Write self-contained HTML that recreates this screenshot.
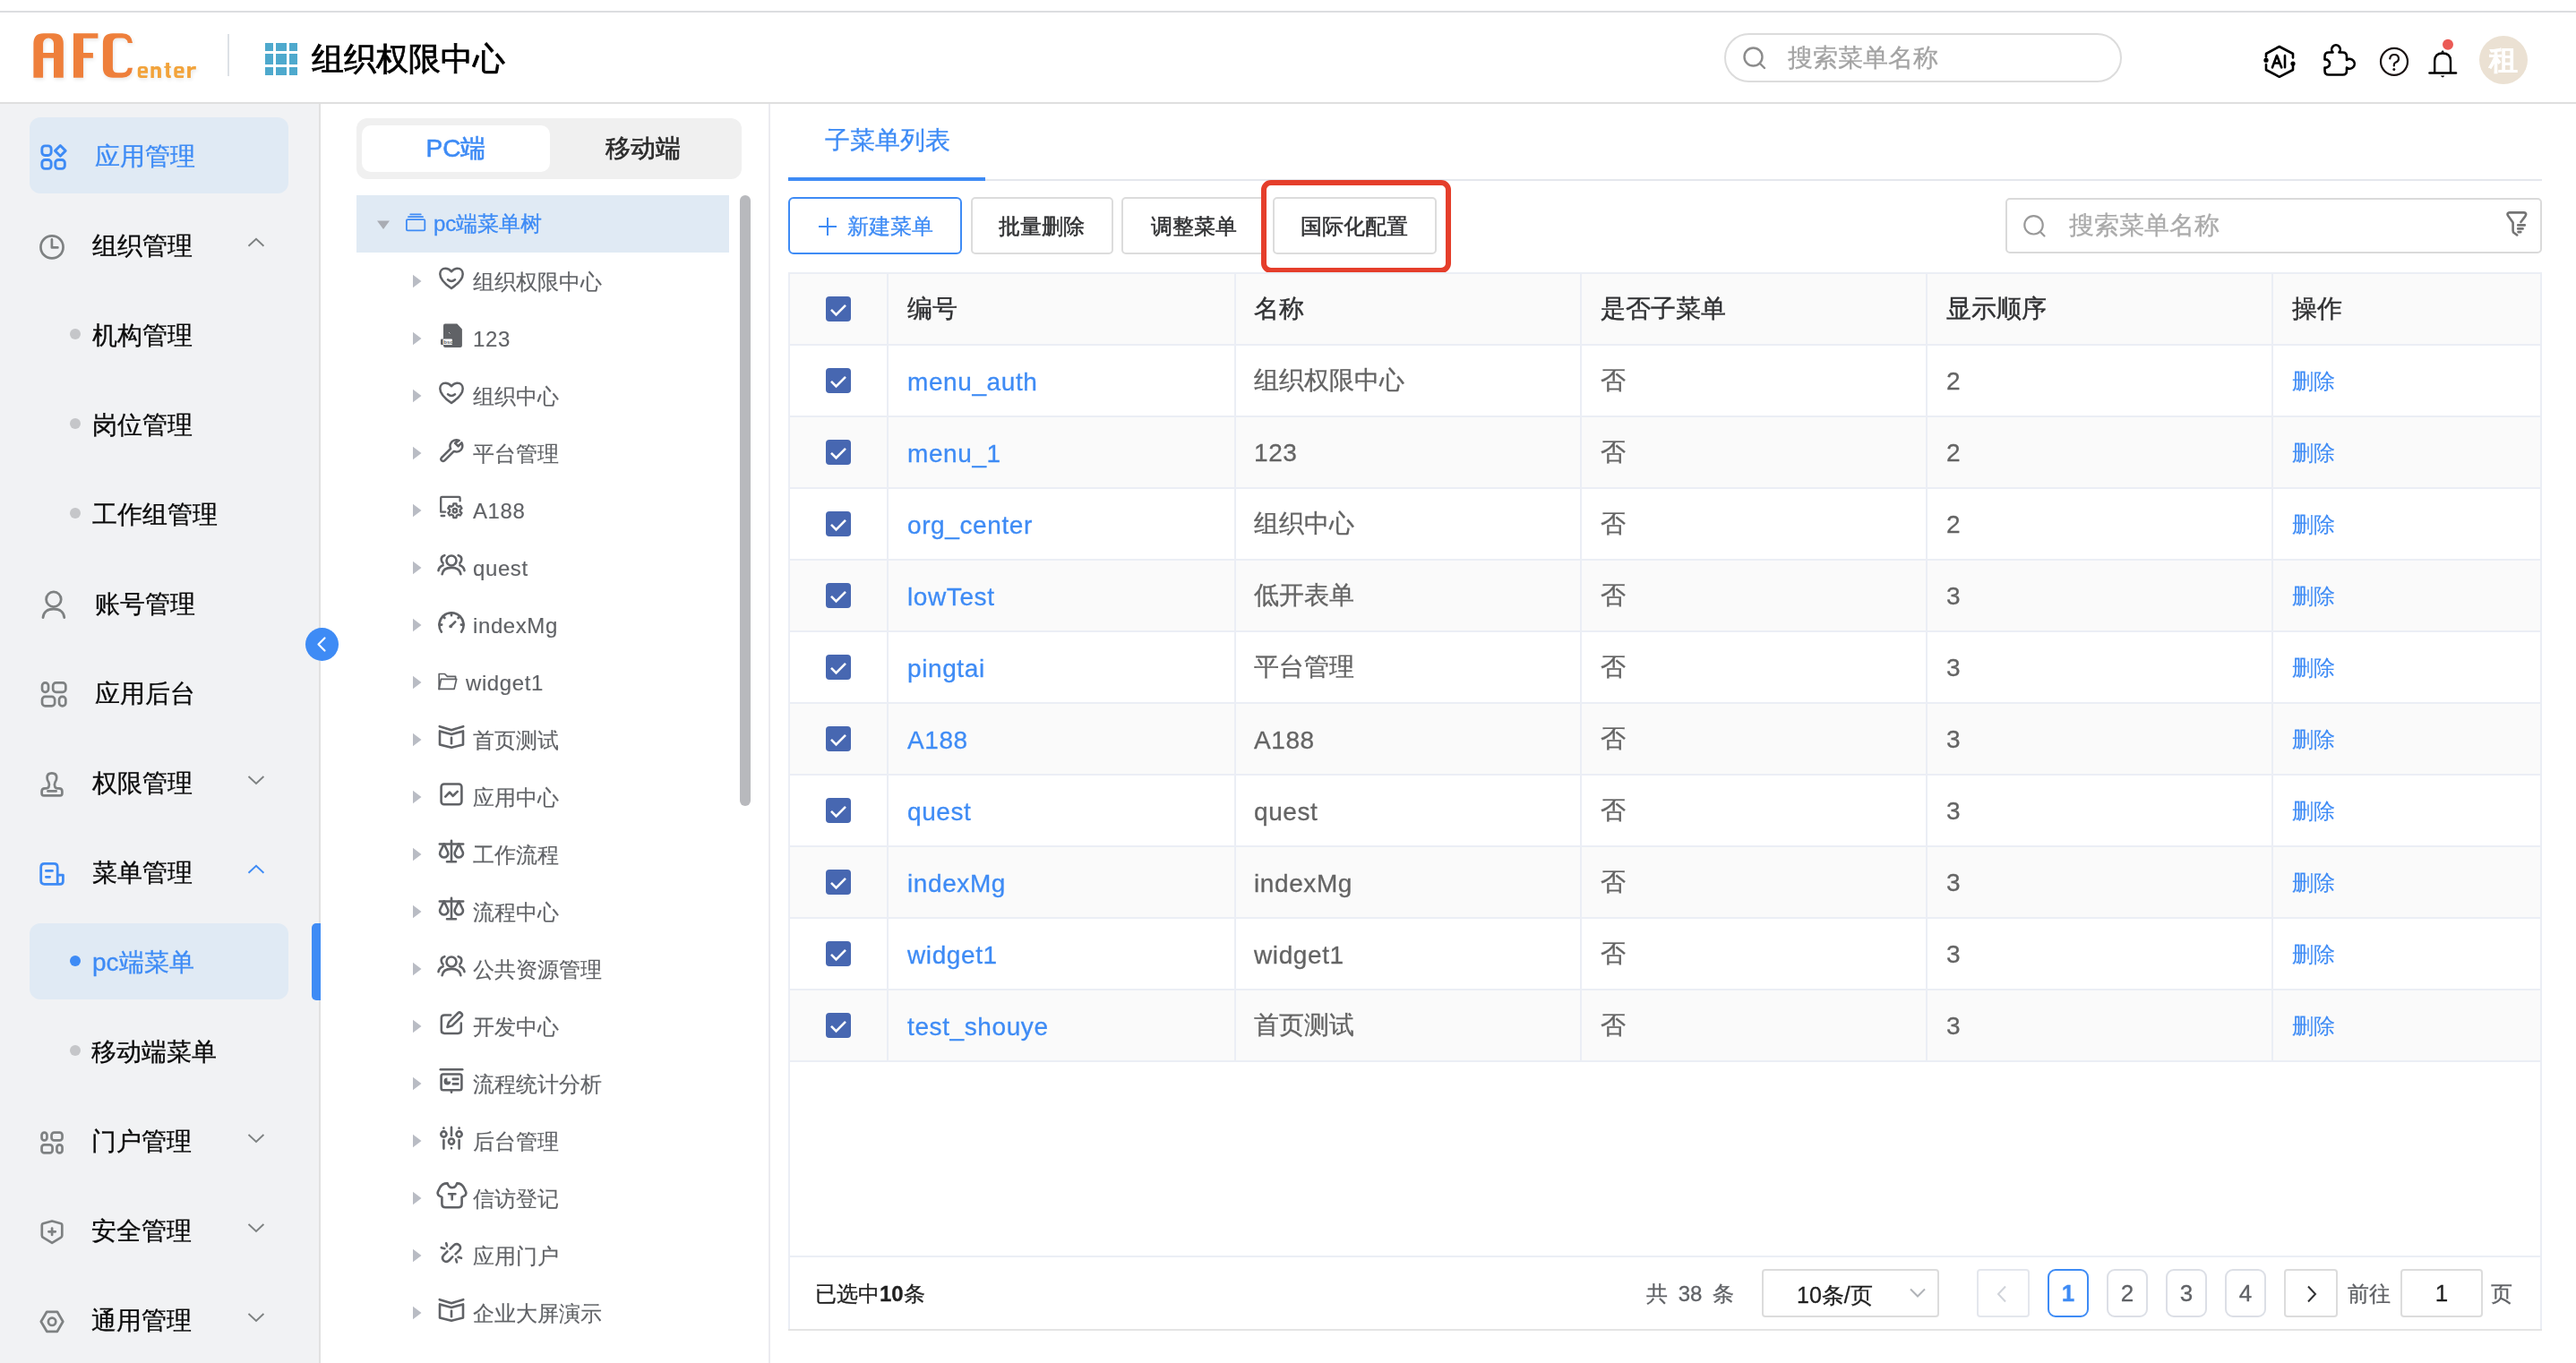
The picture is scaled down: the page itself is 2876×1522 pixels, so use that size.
<!DOCTYPE html>
<html><head><meta charset="utf-8"><title>组织权限中心</title>
<style>
*{box-sizing:border-box;margin:0;padding:0}
html,body{width:2876px;height:1522px;overflow:hidden;background:#fff;font-family:"Liberation Sans",sans-serif}
.a{position:absolute}
.t{position:absolute;white-space:nowrap;line-height:40px;will-change:transform;-webkit-text-stroke-width:0.3px}
.m{-webkit-text-stroke-width:0.6px}
b{font-weight:700}
</style></head><body>
<div class="a" style="left:0;top:12px;width:2876px;height:2px;background:#dcdde0"></div>
<div class="a" style="left:0;top:114px;width:2876px;height:2px;background:#dfdfdf"></div>
<svg class="a" style="left:0;top:0" width="260" height="114" viewBox="0 0 260 114">
<defs><filter id="lsh" x="-10%" y="-10%" width="130%" height="140%"><feGaussianBlur in="SourceAlpha" stdDeviation="2.2"/><feOffset dx="1" dy="2"/><feComponentTransfer><feFuncA type="linear" slope="0.10"/></feComponentTransfer><feMerge><feMergeNode/><feMergeNode in="SourceGraphic"/></feMerge></filter></defs>
<g filter="url(#lsh)">
<path fill="#ee7f3b" fill-rule="evenodd" d="M37.4,86.7 V48.6 Q37.4,37.2 48.6,37.2 H59.6 Q70.8,37.2 70.8,48.6 V86.7 H60 V64.8 H48.1 V86.7 Z M48.1,58.9 H60 V48.6 A5.95,6 0 0 0 48.1,48.6 Z"/>
<path fill="#ee7f3b" d="M82,37.2 H109.4 V42.7 H93 V59.1 H103.9 V64.8 H93 V86.7 H82 Z"/>
<path fill="#ee7f3b" d="M148,48.1 H142.8 Q142,42.6 136,42.6 H131.5 Q125.9,42.6 125.9,48.2 V75.7 Q125.9,81.3 131.5,81.3 H136 Q142,81.3 142.8,75.8 H148 Q147,86.7 136.5,86.7 H126 Q114.9,86.7 114.9,75.6 V48.4 Q114.9,37.2 126,37.2 H136.5 Q147,37.2 148,48.1 Z"/>
<g fill="#f2a33a" fill-rule="evenodd">
<path d="M157.5,74 H161.2 Q165,74 165,77.8 V81.7 H157.2 V83.2 Q157.2,84.2 158.2,84.2 H164.8 L164.2,86.9 H157.5 Q153.75,86.9 153.75,83 V77.8 Q153.75,74 157.5,74 Z M157.2,78.9 H161.5 V77.6 Q161.5,76.4 160.5,76.4 H158.2 Q157.2,76.4 157.2,77.6 Z"/>
<path d="M168.4,74 H171.9 V75 Q173,74 175.5,74 Q179.9,74 179.9,78.5 V86.9 H176 V78.8 Q176,77.6 174.8,77.6 H173 Q171.9,77.6 171.9,78.8 V86.9 H168.4 Z"/>
<path d="M185.2,70 H189 V74 H190.8 V75.8 H189 V82.5 Q189,84.2 190.2,84.2 H190.8 V86.9 H188.5 Q185.2,86.9 185.2,83.5 V75.8 H183.3 V74 H185.2 Z"/>
<path transform="translate(40.55,0)" d="M157.5,74 H161.2 Q165,74 165,77.8 V81.7 H157.2 V83.2 Q157.2,84.2 158.2,84.2 H164.8 L164.2,86.9 H157.5 Q153.75,86.9 153.75,83 V77.8 Q153.75,74 157.5,74 Z M157.2,78.9 H161.5 V77.6 Q161.5,76.4 160.5,76.4 H158.2 Q157.2,76.4 157.2,77.6 Z"/>
<path d="M209.1,74 H212.9 V75.8 Q214,74 216.5,74 H218.8 V77.5 H216 Q212.9,77.5 212.9,80 V86.9 H209.1 Z"/>
</g></g></svg>
<div class="a" style="left:254px;top:38px;width:2px;height:47px;background:#dde1e6"></div>
<svg class="a" style="left:296px;top:48px" width="36" height="36" viewBox="0 0 36 36"><g fill="#4ea9cd"><rect x="0" y="0" width="9" height="9"/><rect x="0" y="12" width="9" height="12"/><rect x="0" y="27" width="9" height="9"/><rect x="12" y="0" width="12" height="9"/><rect x="12" y="12" width="12" height="12"/><rect x="12" y="27" width="12" height="9"/><rect x="27" y="0" width="9" height="9"/><rect x="27" y="12" width="9" height="12"/><rect x="27" y="27" width="9" height="9"/></g></svg>
<div class="t" style="left:348px;top:46px;font-size:36px;-webkit-text-stroke-width:0.8px;color:#000">组织权限中心</div>
<div class="a" style="left:1925px;top:37px;width:444px;height:55px;border:2px solid #dcdcdc;border-radius:28px"></div>
<svg class="a" style="left:1944px;top:50px" width="30" height="30" viewBox="0 0 30 30"><circle cx="13.5" cy="13.5" r="10" fill="none" stroke="#8c8c8c" stroke-width="2.4"/><path d="M21,21 L26,26" stroke="#8c8c8c" stroke-width="2.4" stroke-linecap="round"/></svg>
<div class="t" style="left:1996px;top:45px;font-size:28px;color:#a3a3a3">搜索菜单名称</div>
<svg class="a" style="left:2520px;top:45px" width="50" height="48" viewBox="2520 45 50 48">
<g fill="none" stroke="#000" stroke-width="2.6" stroke-linecap="round" stroke-linejoin="round">
<path d="M2530,63.5 V60 L2544.8,52 L2560,60 V64.5"/>
<path d="M2530,72 V78 L2544.8,85.8 L2560,78 V73"/>
<path d="M2537,75.3 L2542,62 L2547.2,75.3 M2538.8,70.5 H2545.3 M2551,62 V75.3"/>
</g>
<circle cx="2530" cy="67.2" r="2.6" fill="#000"/><circle cx="2560" cy="71" r="2.6" fill="#000"/>
</svg>
<svg class="a" style="left:2588px;top:44px" width="48" height="46" viewBox="2588 44 48 46">
<path fill="none" stroke="#000" stroke-width="2.6" stroke-linejoin="round" d="M2604.5,58.5 A4.8,4.8 0 1 1 2611.5,58.5 H2615.5 Q2620,58.5 2620,63 V67 A5.4,5.4 0 1 1 2620,75.5 V79 Q2620,83.5 2615.5,83.5 H2600 Q2595.5,83.5 2595.5,79 V75.5 A4.6,4.6 0 1 0 2595.5,66.5 V63 Q2595.5,58.5 2600,58.5 Z"/>
</svg>
<svg class="a" style="left:2652px;top:48px" width="42" height="42" viewBox="2652 48 42 42">
<circle cx="2673" cy="68.8" r="15" fill="none" stroke="#1a1212" stroke-width="2.2"/>
<path d="M2668.2,65.5 Q2669,61 2673,61 Q2678,61 2678,65.5 Q2678,68.5 2674.5,69.8 Q2672.8,70.5 2672.8,72.5 V73.5" fill="none" stroke="#1a1212" stroke-width="2.2" stroke-linecap="round"/>
<circle cx="2672.8" cy="77.6" r="1.5" fill="#1a1212"/>
</svg>
<svg class="a" style="left:2706px;top:40px" width="44" height="50" viewBox="2706 40 44 50">
<path d="M2718.2,81 V68 Q2718.2,59.5 2727.1,59.5 Q2736,59.5 2736,68 V81" fill="none" stroke="#000" stroke-width="2.4"/>
<path d="M2712.5,81.5 H2742" stroke="#000" stroke-width="2.6" stroke-linecap="round"/>
<path d="M2725,58.5 L2727.1,56 L2729.2,58.5 Z" fill="#000"/>
<path d="M2725,84.6 H2729.2 Q2728.6,86.4 2727.1,86.4 Q2725.6,86.4 2725,84.6 Z" fill="#000"/>
<circle cx="2733" cy="49.8" r="6" fill="#eb5a55"/>
</svg>
<div class="a" style="left:2768px;top:40px;width:54px;height:54px;border-radius:27px;background:#ebe1d3"></div>
<div class="t" style="left:2768px;top:47px;width:54px;text-align:center;font-size:32px;font-weight:700;color:#fff">租</div>
<div class="a" style="left:0;top:116px;width:356px;height:1406px;background:#f1f2f4"></div>
<div class="a" style="left:356px;top:116px;width:2px;height:1406px;background:#e1e1e1"></div>
<div class="a" style="left:33px;top:131px;width:289px;height:85px;border-radius:12px;background:#e0eaf4"></div>
<svg class="a" style="left:44px;top:158px" width="34" height="36" viewBox="0 0 34 36"><g fill="none" stroke="#3e8bf5" stroke-width="2.9" stroke-linecap="round" stroke-linejoin="round"><rect x="2.85" y="4.85" width="10.3" height="10.6" rx="3.4"/><rect x="2.85" y="20.45" width="10.3" height="9.9" rx="3.4"/><rect x="17.75" y="20.45" width="10.6" height="9.9" rx="3.4"/><path d="M23.35,4.5 L29.2,10.35 L23.35,16.2 L17.5,10.35 Z"/></g></svg>
<div class="t" style="left:106px;top:155px;font-size:28px;color:#3e8bf5">应用管理</div>
<svg class="a" style="left:44px;top:258px" width="34" height="36" viewBox="0 0 34 36"><g fill="none" stroke="#7e8182" stroke-width="2.7" stroke-linecap="round" stroke-linejoin="round"><circle cx="14" cy="17.9" r="12.55"/><path d="M13.9,9.4 V18.4 H20.4"/></g></svg>
<div class="t" style="left:103px;top:255px;font-size:28px;color:#0a0a0a">组织管理</div>
<svg class="a" style="left:270px;top:260px" width="32" height="24" viewBox="270 260 32 24"><path d="M277.5,274.7 L286,266.7 L294.4,274.7" fill="none" stroke="#7d8181" stroke-width="1.9"/></svg>
<div class="a" style="left:78px;top:367px;width:12px;height:12px;border-radius:6px;background:#c5c6c9"></div>
<div class="t" style="left:103px;top:355px;font-size:28px;color:#0a0a0a">机构管理</div>
<div class="a" style="left:78px;top:467px;width:12px;height:12px;border-radius:6px;background:#c5c6c9"></div>
<div class="t" style="left:103px;top:455px;font-size:28px;color:#0a0a0a">岗位管理</div>
<div class="a" style="left:78px;top:567px;width:12px;height:12px;border-radius:6px;background:#c5c6c9"></div>
<div class="t" style="left:103px;top:555px;font-size:28px;color:#0a0a0a">工作组管理</div>
<svg class="a" style="left:44px;top:658px" width="34" height="36" viewBox="0 0 34 36"><g fill="none" stroke="#7e8182" stroke-width="2.8" stroke-linecap="round" stroke-linejoin="round"><circle cx="15.9" cy="11.25" r="8.3"/><path d="M4,31.6 C4.5,25.5 9,22 15.9,22 C22.8,22 27.3,25.5 27.8,31.6"/></g></svg>
<div class="t" style="left:106px;top:655px;font-size:28px;color:#0a0a0a">账号管理</div>
<svg class="a" style="left:44px;top:758px" width="34" height="36" viewBox="0 0 34 36"><g fill="none" stroke="#7e8182" stroke-width="2.7" stroke-linecap="round" stroke-linejoin="round"><rect x="3.05" y="4.45" width="7" height="10.4" rx="3.4"/><rect x="15.15" y="4.45" width="14.2" height="10.4" rx="3.4"/><rect x="3.05" y="19.95" width="14.1" height="10.4" rx="3.4"/><rect x="22.05" y="19.95" width="7.3" height="10.4" rx="3.4"/></g></svg>
<div class="t" style="left:106px;top:755px;font-size:28px;color:#0a0a0a">应用后台</div>
<svg class="a" style="left:44px;top:858px" width="34" height="36" viewBox="0 0 34 36"><g fill="none" stroke="#7e8182" stroke-width="2.7" stroke-linecap="round" stroke-linejoin="round"><path d="M10.5,20.5 Q11.5,18 10.3,15.5 Q8.6,13 8.6,10.5 Q8.6,5.4 13.9,5.4 Q19.2,5.4 19.2,10.5 Q19.2,13 17.5,15.5 Q16.3,18 17.3,20.5 Q18,22.4 20.5,22.4 H22 Q25.4,22.4 25.4,25.8 V28 Q25.4,30.3 23.1,30.3 H4.9 Q2.6,30.3 2.6,28 V25.8 Q2.6,22.4 6,22.4 H7.3 Q9.8,22.4 10.5,20.5 Z"/><path d="M9.5,25.4 H18.6"/></g></svg>
<div class="t" style="left:103px;top:855px;font-size:28px;color:#0a0a0a">权限管理</div>
<svg class="a" style="left:270px;top:860px" width="32" height="24" viewBox="270 860 32 24"><path d="M277.5,867 L286,875 L294.4,867" fill="none" stroke="#7d8181" stroke-width="1.9"/></svg>
<svg class="a" style="left:44px;top:958px" width="34" height="36" viewBox="0 0 34 36"><g fill="none" stroke="#3e8bf5" stroke-width="2.8" stroke-linecap="round" stroke-linejoin="round"><path d="M20.2,29.3 V10.4 Q20.2,6.4 16.2,6.4 H5.7 Q1.7,6.4 1.7,10.4 V25.3 Q1.7,29.3 5.7,29.3 H23 Q26.4,29.3 26.4,25.9 V19.1 H20.2"/><path d="M7.4,14.4 H14.5 M7.4,21.3 H11.6"/></g></svg>
<div class="t" style="left:103px;top:955px;font-size:28px;color:#0a0a0a">菜单管理</div>
<svg class="a" style="left:270px;top:960px" width="32" height="24" viewBox="270 960 32 24"><path d="M277.5,974.7 L286,966.7 L294.4,974.7" fill="none" stroke="#3e8bf5" stroke-width="1.9"/></svg>
<div class="a" style="left:33px;top:1031px;width:289px;height:85px;border-radius:12px;background:#e0eaf4"></div>
<div class="a" style="left:348px;top:1031px;width:10px;height:86px;border-radius:5px 0 0 5px;background:#3e8bf5"></div>
<div class="a" style="left:78px;top:1067px;width:12px;height:12px;border-radius:6px;background:#3e8bf5"></div>
<div class="t" style="left:103px;top:1055px;font-size:28px;color:#3e8bf5">pc端菜单</div>
<div class="a" style="left:78px;top:1167px;width:12px;height:12px;border-radius:6px;background:#c5c6c9"></div>
<div class="t" style="left:102px;top:1155px;font-size:28px;color:#0a0a0a">移动端菜单</div>
<svg class="a" style="left:44px;top:1258px" width="34" height="36" viewBox="0 0 34 36"><g fill="none" stroke="#7e8182" stroke-width="2.7" stroke-linecap="round" stroke-linejoin="round"><rect x="2.55" y="6.55" width="5.9" height="8.8" rx="2.9"/><rect x="13.55" y="6.55" width="12" height="8.8" rx="2.9"/><rect x="2.55" y="20.45" width="12" height="8.9" rx="2.9"/><rect x="19.45" y="20.45" width="6.1" height="8.9" rx="2.9"/></g></svg>
<div class="t" style="left:102px;top:1255px;font-size:28px;color:#0a0a0a">门户管理</div>
<svg class="a" style="left:270px;top:1260px" width="32" height="24" viewBox="270 1260 32 24"><path d="M277.5,1267 L286,1275 L294.4,1267" fill="none" stroke="#7d8181" stroke-width="1.9"/></svg>
<svg class="a" style="left:44px;top:1358px" width="34" height="36" viewBox="0 0 34 36"><g fill="none" stroke="#7e8182" stroke-width="2.7" stroke-linecap="round" stroke-linejoin="round"><path d="M14.1,5.5 L24,8.2 Q25.3,8.6 25.3,10 V21.5 Q25.3,23 24,23.8 L14.1,29.8 L4.2,23.8 Q2.8,23 2.8,21.5 V10 Q2.8,8.6 4.1,8.2 Z"/><path d="M14.1,13.6 V21 M10.4,17.3 H17.8"/></g></svg>
<div class="t" style="left:102px;top:1355px;font-size:28px;color:#0a0a0a">安全管理</div>
<svg class="a" style="left:270px;top:1360px" width="32" height="24" viewBox="270 1360 32 24"><path d="M277.5,1367 L286,1375 L294.4,1367" fill="none" stroke="#7d8181" stroke-width="1.9"/></svg>
<svg class="a" style="left:44px;top:1458px" width="34" height="36" viewBox="0 0 34 36"><g fill="none" stroke="#7e8182" stroke-width="2.7" stroke-linecap="round" stroke-linejoin="round"><path d="M1.8,17.8 L8.3,6.8 H19.9 L26.3,17.8 L19.9,28.8 H8.3 Z"/><circle cx="14.1" cy="17.8" r="4.2"/></g></svg>
<div class="t" style="left:102px;top:1455px;font-size:28px;color:#0a0a0a">通用管理</div>
<svg class="a" style="left:270px;top:1460px" width="32" height="24" viewBox="270 1460 32 24"><path d="M277.5,1467 L286,1475 L294.4,1467" fill="none" stroke="#7d8181" stroke-width="1.9"/></svg>
<div class="a" style="left:341px;top:701px;width:37px;height:37px;border-radius:19px;background:#3e8bf5"></div>
<svg class="a" style="left:341px;top:701px" width="37" height="37" viewBox="0 0 37 37"><path d="M21.5,11.5 L14.5,18.5 L21.5,25.5" fill="none" stroke="#fff" stroke-width="2.2" stroke-linecap="round" stroke-linejoin="round"/></svg>
<div class="a" style="left:858px;top:116px;width:2px;height:1406px;background:#ebebf0"></div>
<div class="a" style="left:398px;top:132px;width:430px;height:68px;border-radius:12px;background:#f0f0f0"></div>
<div class="a" style="left:404px;top:140px;width:210px;height:52px;border-radius:10px;background:#fff"></div>
<div class="t m" style="left:404px;top:146px;width:210px;text-align:center;font-size:28px;color:#3e8bf5">PC端</div>
<div class="t m" style="left:614px;top:146px;width:208px;text-align:center;font-size:28px;color:#2b2b2b">移动端</div>
<div class="a" style="left:398px;top:218px;width:416px;height:64px;background:#e0eaf4"></div>
<svg class="a" style="left:420px;top:245px" width="16" height="12" viewBox="0 0 16 12"><path d="M1,1.5 H15 L8,11 Z" fill="#a9acb3"/></svg>
<svg class="a" style="left:448px;top:232px" width="32" height="32" viewBox="0 0 32 32"><g fill="none" stroke="#3e8bf5" stroke-width="1.8" stroke-linecap="round" stroke-linejoin="round"><path d="M10.2,7.3 H21.8 M8,10.2 H24"/><rect x="5.9" y="13.1" width="20.4" height="12.3" rx="1.2"/></g></svg>
<div class="t" style="left:484px;top:230px;font-size:24px;color:#3e8bf5">pc端菜单树</div>
<div class="a" style="left:826px;top:218px;width:12px;height:682px;border-radius:6px;background:#b8b9bd"></div>
<svg class="a" style="left:460px;top:306px" width="12" height="16" viewBox="0 0 12 16"><path d="M1,0.8 L10.5,8 L1,15.2 Z" fill="#b9bcc4"/></svg>
<svg class="a" style="left:484px;top:292px" width="40" height="44" viewBox="0 0 40 44"><g fill="none" stroke="#606266" stroke-width="2.5" stroke-linecap="round" stroke-linejoin="round"><path d="M20,11.3 C18,8.6 15.6,7.7 13.2,7.7 C9.6,7.7 7.3,10.4 7.3,13.9 C7.3,20.2 13.2,25.3 20,30 C26.8,25.3 32.7,20.2 32.7,13.9 C32.7,10.4 30.4,7.7 26.8,7.7 C24.4,7.7 22,8.6 20,11.3 Z"/><path d="M16,20.3 Q20,23.6 24,20.3"/></g></svg>
<div class="t" style="left:528px;top:295px;font-size:24px;letter-spacing:0;-webkit-text-stroke-width:0.15px;color:#606266">组织权限中心</div>
<svg class="a" style="left:460px;top:370px" width="12" height="16" viewBox="0 0 12 16"><path d="M1,0.8 L10.5,8 L1,15.2 Z" fill="#b9bcc4"/></svg>
<svg class="a" style="left:484px;top:356px" width="40" height="44" viewBox="0 0 40 44"><path fill="#606266" d="M13,5.6 H26.3 L31.9,11.6 V30 Q31.9,32 29.9,32 H13 Q11,32 11,30 V7.6 Q11,5.6 13,5.6 Z"/><rect x="8" y="22.6" width="4" height="6.4" rx="1" fill="#606266"/><rect x="10.6" y="22.6" width="10.4" height="6.4" rx="1" fill="#fff"/><text x="11.2" y="28" font-size="6.2" font-weight="700" fill="#606266" font-family="Liberation Sans">bsd</text><path d="M17.2,15.2 L18.4,16.4" stroke="#fff" stroke-width="0.8"/></svg>
<div class="t" style="left:528px;top:359px;font-size:24px;letter-spacing:0.6px;-webkit-text-stroke-width:0.15px;color:#606266">123</div>
<svg class="a" style="left:460px;top:434px" width="12" height="16" viewBox="0 0 12 16"><path d="M1,0.8 L10.5,8 L1,15.2 Z" fill="#b9bcc4"/></svg>
<svg class="a" style="left:484px;top:420px" width="40" height="44" viewBox="0 0 40 44"><g fill="none" stroke="#606266" stroke-width="2.5" stroke-linecap="round" stroke-linejoin="round"><path d="M20,11.3 C18,8.6 15.6,7.7 13.2,7.7 C9.6,7.7 7.3,10.4 7.3,13.9 C7.3,20.2 13.2,25.3 20,30 C26.8,25.3 32.7,20.2 32.7,13.9 C32.7,10.4 30.4,7.7 26.8,7.7 C24.4,7.7 22,8.6 20,11.3 Z"/><path d="M16,20.3 Q20,23.6 24,20.3"/></g></svg>
<div class="t" style="left:528px;top:423px;font-size:24px;letter-spacing:0;-webkit-text-stroke-width:0.15px;color:#606266">组织中心</div>
<svg class="a" style="left:460px;top:498px" width="12" height="16" viewBox="0 0 12 16"><path d="M1,0.8 L10.5,8 L1,15.2 Z" fill="#b9bcc4"/></svg>
<svg class="a" style="left:484px;top:484px" width="40" height="44" viewBox="0 0 40 44"><g fill="none" stroke="#606266" stroke-width="2.5" stroke-linecap="round" stroke-linejoin="round"><path d="M28.6,7.8 C25,6.4 20.6,7.6 19,11.4 C18.2,13.4 18.4,15.4 19.1,17 L9,27 C7.6,28.5 8.4,31 10.8,30.9 C11.6,30.8 12.2,30.4 12.8,29.8 L22.8,19.9 C24.5,20.6 26.6,20.7 28.6,19.8 C32.2,18.1 33.2,14 31.4,10.4 L27.6,14.3 L24.1,10.9 Z"/></g></svg>
<div class="t" style="left:528px;top:487px;font-size:24px;letter-spacing:0;-webkit-text-stroke-width:0.15px;color:#606266">平台管理</div>
<svg class="a" style="left:460px;top:562px" width="12" height="16" viewBox="0 0 12 16"><path d="M1,0.8 L10.5,8 L1,15.2 Z" fill="#b9bcc4"/></svg>
<svg class="a" style="left:484px;top:548px" width="40" height="44" viewBox="0 0 40 44"><g fill="none" stroke="#606266" stroke-width="2.3" stroke-linecap="round" stroke-linejoin="round"><path d="M13.2,23.7 H8.2 V8 Q8.2,6.8 9.4,6.8 H28.4 Q29.6,6.8 29.6,8 V11.4"/><path d="M8.6,28 H12.2"/><path d="M22.04,16.60 L22.31,14.36 L25.49,14.36 L25.76,16.60 L27.82,17.79 L29.90,16.90 L31.48,19.66 L29.68,21.01 L29.68,23.39 L31.48,24.74 L29.90,27.50 L27.82,26.61 L25.76,27.80 L25.49,30.04 L22.31,30.04 L22.04,27.80 L19.98,26.61 L17.90,27.50 L16.32,24.74 L18.12,23.39 L18.12,21.01 L16.32,19.66 L17.90,16.90 L19.98,17.79 Z"/><circle cx="23.9" cy="22.2" r="2.2"/></g></svg>
<div class="t" style="left:528px;top:551px;font-size:24px;letter-spacing:0.6px;-webkit-text-stroke-width:0.15px;color:#606266">A188</div>
<svg class="a" style="left:460px;top:626px" width="12" height="16" viewBox="0 0 12 16"><path d="M1,0.8 L10.5,8 L1,15.2 Z" fill="#b9bcc4"/></svg>
<svg class="a" style="left:484px;top:612px" width="40" height="44" viewBox="0 0 40 44"><g fill="none" stroke="#606266" stroke-width="2.6" stroke-linecap="round" stroke-linejoin="round"><circle cx="20" cy="14" r="5.5"/><path d="M9.6,29.2 C10.4,24.3 14.5,21.9 20,21.9 C25.5,21.9 29.6,24.3 30.4,29.2"/><path d="M12.3,8.2 C9.5,9 8.3,11 8.8,13.5 C9.1,15 9.8,16.2 10.6,16.8"/><path d="M10.6,19.2 C7.6,20.3 5.8,22.5 5.5,25.2"/><path d="M27.7,8.2 C30.5,9 31.7,11 31.2,13.5 C30.9,15 30.2,16.2 29.4,16.8"/><path d="M29.4,19.2 C32.4,20.3 34.2,22.5 34.5,25.2"/></g></svg>
<div class="t" style="left:528px;top:615px;font-size:24px;letter-spacing:0.6px;-webkit-text-stroke-width:0.15px;color:#606266">quest</div>
<svg class="a" style="left:460px;top:690px" width="12" height="16" viewBox="0 0 12 16"><path d="M1,0.8 L10.5,8 L1,15.2 Z" fill="#b9bcc4"/></svg>
<svg class="a" style="left:484px;top:676px" width="40" height="44" viewBox="0 0 40 44"><g fill="none" stroke="#606266" stroke-width="2.6" stroke-linecap="round" stroke-linejoin="round"><path d="M8.8,29.6 A13.6,13.6 0 1 1 31.2,29.6"/><path d="M20,8.6 V11.3 M10.6,12.2 L12.4,14 M29.4,12.2 L27.6,14 M6.6,21.6 H9.2 M33.4,21.6 H30.8"/></g><g stroke="#606266" stroke-linecap="round"><path d="M19.4,23.2 L24.2,18.4" stroke-width="2.6"/><circle cx="19.2" cy="23.4" r="1.9" fill="#606266" stroke="none"/></g></svg>
<div class="t" style="left:528px;top:679px;font-size:24px;letter-spacing:0.6px;-webkit-text-stroke-width:0.15px;color:#606266">indexMg</div>
<svg class="a" style="left:460px;top:754px" width="12" height="16" viewBox="0 0 12 16"><path d="M1,0.8 L10.5,8 L1,15.2 Z" fill="#b9bcc4"/></svg>
<svg class="a" style="left:484px;top:740px" width="40" height="44" viewBox="0 0 40 44"><g fill="none" stroke="#606266" stroke-width="1.7" stroke-linecap="round" stroke-linejoin="round"><path d="M6.2,29.4 V12.5 H12.5 L15.4,15.4 H24.6 V18.2"/><path d="M8.4,18.3 H25.7 L23.1,29.4 H6.2 Z"/></g></svg>
<div class="t" style="left:520px;top:743px;font-size:24px;letter-spacing:0.6px;-webkit-text-stroke-width:0.15px;color:#606266">widget1</div>
<svg class="a" style="left:460px;top:818px" width="12" height="16" viewBox="0 0 12 16"><path d="M1,0.8 L10.5,8 L1,15.2 Z" fill="#b9bcc4"/></svg>
<svg class="a" style="left:484px;top:804px" width="40" height="44" viewBox="0 0 40 44"><g fill="none" stroke="#606266" stroke-width="2.6" stroke-linecap="round" stroke-linejoin="round"><path d="M6.8,7.2 L20,11.2 L33.2,7.2"/><path d="M7,12.4 L20,16 L33,12.4 V27.4 L20,30.8 L7,27.4 Z"/><path d="M20,19.8 V26.2"/></g></svg>
<div class="t" style="left:528px;top:807px;font-size:24px;letter-spacing:0;-webkit-text-stroke-width:0.15px;color:#606266">首页测试</div>
<svg class="a" style="left:460px;top:882px" width="12" height="16" viewBox="0 0 12 16"><path d="M1,0.8 L10.5,8 L1,15.2 Z" fill="#b9bcc4"/></svg>
<svg class="a" style="left:484px;top:868px" width="40" height="44" viewBox="0 0 40 44"><g fill="none" stroke="#606266" stroke-width="2.6" stroke-linecap="round" stroke-linejoin="round"><rect x="8.6" y="7.5" width="22.8" height="22.8" rx="3.2"/><path d="M13.3,21.6 L18,16.6 L21.7,20.8 L26.7,15.9"/></g></svg>
<div class="t" style="left:528px;top:871px;font-size:24px;letter-spacing:0;-webkit-text-stroke-width:0.15px;color:#606266">应用中心</div>
<svg class="a" style="left:460px;top:946px" width="12" height="16" viewBox="0 0 12 16"><path d="M1,0.8 L10.5,8 L1,15.2 Z" fill="#b9bcc4"/></svg>
<svg class="a" style="left:484px;top:932px" width="40" height="44" viewBox="0 0 40 44"><g fill="none" stroke="#606266" stroke-width="2.6" stroke-linecap="round" stroke-linejoin="round"><path d="M20,6.8 V30.2 M15,30.3 H25 M6.8,10.5 H33.2"/><path d="M11.7,10.4 L7.4,19.2 A4.6,4.6 0 1 0 16,19.2 Z"/><path d="M28.3,10.4 L24,19.2 A4.6,4.6 0 1 0 32.6,19.2 Z"/></g></svg>
<div class="t" style="left:528px;top:935px;font-size:24px;letter-spacing:0;-webkit-text-stroke-width:0.15px;color:#606266">工作流程</div>
<svg class="a" style="left:460px;top:1010px" width="12" height="16" viewBox="0 0 12 16"><path d="M1,0.8 L10.5,8 L1,15.2 Z" fill="#b9bcc4"/></svg>
<svg class="a" style="left:484px;top:996px" width="40" height="44" viewBox="0 0 40 44"><g fill="none" stroke="#606266" stroke-width="2.6" stroke-linecap="round" stroke-linejoin="round"><path d="M20,6.8 V30.2 M15,30.3 H25 M6.8,10.5 H33.2"/><path d="M11.7,10.4 L7.4,19.2 A4.6,4.6 0 1 0 16,19.2 Z"/><path d="M28.3,10.4 L24,19.2 A4.6,4.6 0 1 0 32.6,19.2 Z"/></g></svg>
<div class="t" style="left:528px;top:999px;font-size:24px;letter-spacing:0;-webkit-text-stroke-width:0.15px;color:#606266">流程中心</div>
<svg class="a" style="left:460px;top:1074px" width="12" height="16" viewBox="0 0 12 16"><path d="M1,0.8 L10.5,8 L1,15.2 Z" fill="#b9bcc4"/></svg>
<svg class="a" style="left:484px;top:1060px" width="40" height="44" viewBox="0 0 40 44"><g fill="none" stroke="#606266" stroke-width="2.6" stroke-linecap="round" stroke-linejoin="round"><circle cx="20" cy="14" r="5.5"/><path d="M9.6,29.2 C10.4,24.3 14.5,21.9 20,21.9 C25.5,21.9 29.6,24.3 30.4,29.2"/><path d="M12.3,8.2 C9.5,9 8.3,11 8.8,13.5 C9.1,15 9.8,16.2 10.6,16.8"/><path d="M10.6,19.2 C7.6,20.3 5.8,22.5 5.5,25.2"/><path d="M27.7,8.2 C30.5,9 31.7,11 31.2,13.5 C30.9,15 30.2,16.2 29.4,16.8"/><path d="M29.4,19.2 C32.4,20.3 34.2,22.5 34.5,25.2"/></g></svg>
<div class="t" style="left:528px;top:1063px;font-size:24px;letter-spacing:0;-webkit-text-stroke-width:0.15px;color:#606266">公共资源管理</div>
<svg class="a" style="left:460px;top:1138px" width="12" height="16" viewBox="0 0 12 16"><path d="M1,0.8 L10.5,8 L1,15.2 Z" fill="#b9bcc4"/></svg>
<svg class="a" style="left:484px;top:1124px" width="40" height="44" viewBox="0 0 40 44"><g fill="none" stroke="#606266" stroke-width="2.5" stroke-linecap="round" stroke-linejoin="round"><path d="M19.2,9.4 H12.2 Q8.8,9.4 8.8,12.8 V26.6 Q8.8,30 12.2,30 H27.4 Q30.8,30 30.8,26.6 V18.4"/><path d="M15.4,23 L17,17.6 L27.6,7 Q29,5.6 30.4,7 L31.4,8 Q32.8,9.4 31.4,10.8 L20.8,21.4 Z"/></g></svg>
<div class="t" style="left:528px;top:1127px;font-size:24px;letter-spacing:0;-webkit-text-stroke-width:0.15px;color:#606266">开发中心</div>
<svg class="a" style="left:460px;top:1202px" width="12" height="16" viewBox="0 0 12 16"><path d="M1,0.8 L10.5,8 L1,15.2 Z" fill="#b9bcc4"/></svg>
<svg class="a" style="left:484px;top:1188px" width="40" height="44" viewBox="0 0 40 44"><g fill="none" stroke="#606266" stroke-width="2.6" stroke-linecap="round" stroke-linejoin="round"><path d="M7.8,6.2 H32.2"/><rect x="8.6" y="11.5" width="22.8" height="17.8" rx="2.2"/><path d="M20,29.5 V31.8 M21.8,16.9 H27.4 M21.8,22.4 H27.4"/></g><path d="M15.4,15.6 A3.9,3.9 0 1 0 19.3,19.5 H15.4 Z" fill="#606266"/></svg>
<div class="t" style="left:528px;top:1191px;font-size:24px;letter-spacing:0;-webkit-text-stroke-width:0.15px;color:#606266">流程统计分析</div>
<svg class="a" style="left:460px;top:1266px" width="12" height="16" viewBox="0 0 12 16"><path d="M1,0.8 L10.5,8 L1,15.2 Z" fill="#b9bcc4"/></svg>
<svg class="a" style="left:484px;top:1252px" width="40" height="44" viewBox="0 0 40 44"><g fill="none" stroke="#606266" stroke-width="2.6" stroke-linecap="round" stroke-linejoin="round"><path d="M11.4,7.6 V7.8 M11.4,21 V30.6 M20,6.9 V16 M20,30 V30.2 M28.6,7.6 V7.8 M28.6,21 V30.6"/><circle cx="11.4" cy="14.5" r="3.1"/><circle cx="20" cy="22.6" r="3.1"/><circle cx="28.6" cy="14.5" r="3.1"/></g></svg>
<div class="t" style="left:528px;top:1255px;font-size:24px;letter-spacing:0;-webkit-text-stroke-width:0.15px;color:#606266">后台管理</div>
<svg class="a" style="left:460px;top:1330px" width="12" height="16" viewBox="0 0 12 16"><path d="M1,0.8 L10.5,8 L1,15.2 Z" fill="#b9bcc4"/></svg>
<svg class="a" style="left:484px;top:1316px" width="40" height="44" viewBox="0 0 40 44"><g fill="none" stroke="#606266" stroke-width="2.6" stroke-linecap="round" stroke-linejoin="round"><path d="M15.6,5.4 Q17,10.2 20.9,10.2 Q24.8,10.2 26.2,5.4 Q31,5.2 33.8,10 L36,14.6 Q37.2,17.6 34.4,19.4 L31.6,20.8 V28.2 Q31.6,32.2 27.6,32.2 H13.4 Q9.4,32.2 9.4,28.2 V20.8 L6.6,19.4 Q3.8,17.6 5,14.6 L7.2,10 Q10,5.2 15.6,5.4 Z"/><path d="M17,17.2 H24.4 M20.7,17.2 V23.4"/></g></svg>
<div class="t" style="left:528px;top:1319px;font-size:24px;letter-spacing:0;-webkit-text-stroke-width:0.15px;color:#606266">信访登记</div>
<svg class="a" style="left:460px;top:1394px" width="12" height="16" viewBox="0 0 12 16"><path d="M1,0.8 L10.5,8 L1,15.2 Z" fill="#b9bcc4"/></svg>
<svg class="a" style="left:484px;top:1380px" width="40" height="44" viewBox="0 0 40 44"><g fill="none" stroke="#606266" stroke-width="2.6" stroke-linecap="round" stroke-linejoin="round"><path d="M18.7,14.5 L22.3,10.9 Q25.3,7.9 28.6,10.2 Q31.4,13 28.6,16.4 L24.6,20.4"/><path d="M15.4,17.5 L11.6,21.3 Q8.6,24.6 11.3,27.6 Q14.3,30.3 17.6,27.3 L21.3,23.3"/><path d="M14.2,8.3 L15,11.4 M8.8,13.2 L12.4,14.2 M27.6,23.8 L31,24.8 M25,26 L26,29.4"/></g></svg>
<div class="t" style="left:528px;top:1383px;font-size:24px;letter-spacing:0;-webkit-text-stroke-width:0.15px;color:#606266">应用门户</div>
<svg class="a" style="left:460px;top:1458px" width="12" height="16" viewBox="0 0 12 16"><path d="M1,0.8 L10.5,8 L1,15.2 Z" fill="#b9bcc4"/></svg>
<svg class="a" style="left:484px;top:1444px" width="40" height="44" viewBox="0 0 40 44"><g fill="none" stroke="#606266" stroke-width="2.6" stroke-linecap="round" stroke-linejoin="round"><path d="M6.8,7.2 L20,11.2 L33.2,7.2"/><path d="M7,12.4 L20,16 L33,12.4 V27.4 L20,30.8 L7,27.4 Z"/><path d="M20,19.8 V26.2"/></g></svg>
<div class="t" style="left:528px;top:1447px;font-size:24px;letter-spacing:0;-webkit-text-stroke-width:0.15px;color:#606266">企业大屏演示</div>
<div class="t" style="left:921px;top:137px;font-size:28px;color:#3e8bf5">子菜单列表</div>
<div class="a" style="left:880px;top:200px;width:1958px;height:2px;background:#e4e7ed"></div>
<div class="a" style="left:880px;top:198px;width:220px;height:4px;background:#3e8bf5"></div>
<div class="a" style="left:880px;top:220px;width:194px;height:64px;border:2px solid #3e8bf5;border-radius:6px"></div>
<svg class="a" style="left:913px;top:242px" width="22" height="22" viewBox="0 0 22 22"><path d="M11,1 V21 M1,11 H21" stroke="#3e8bf5" stroke-width="2"/></svg>
<div class="t" style="left:946px;top:233px;font-size:24px;-webkit-text-stroke-width:0.3px;color:#3e8bf5">新建菜单</div>
<div class="a" style="left:1084px;top:220px;width:159px;height:64px;border:2px solid #dcdcdc;border-radius:5px"></div>
<div class="t" style="left:1115px;top:233px;font-size:24px;-webkit-text-stroke-width:0.5px;color:#303133">批量删除</div>
<div class="a" style="left:1252px;top:220px;width:161px;height:64px;border:2px solid #dcdcdc;border-radius:5px"></div>
<div class="t" style="left:1285px;top:233px;font-size:24px;-webkit-text-stroke-width:0.5px;color:#303133">调整菜单</div>
<div class="a" style="left:1421px;top:220px;width:183px;height:64px;border:2px solid #dcdcdc;border-radius:5px"></div>
<div class="t" style="left:1452px;top:233px;font-size:24px;-webkit-text-stroke-width:0.5px;color:#303133">国际化配置</div>
<div class="a" style="left:1408px;top:201px;width:212px;height:104px;border:6px solid #e53e2b;border-radius:11px"></div>
<div class="a" style="left:2239px;top:221px;width:599px;height:62px;border:2px solid #dadada;border-radius:5px"></div>
<svg class="a" style="left:2257px;top:238px" width="30" height="30" viewBox="0 0 30 30"><circle cx="13.5" cy="13.3" r="10.2" fill="none" stroke="#999" stroke-width="2.2"/><path d="M21,21 L25.5,25.5" stroke="#999" stroke-width="2.2" stroke-linecap="round"/></svg>
<div class="t" style="left:2310px;top:232px;font-size:28px;color:#aaaaaa">搜索菜单名称</div>
<svg class="a" style="left:2790px;top:228px" width="40" height="44" viewBox="0 0 40 44"><g fill="none" stroke="#747474" stroke-width="2.6" stroke-linecap="round" stroke-linejoin="round"><path d="M24.4,20 L29.2,13.6 Q30.8,11.2 29.6,10 Q29,9.35 27.8,9.35 H11.8 Q10.4,9.35 9.8,10.3 Q9.1,11.6 10.2,13.1 L15.6,20.6 V29.4 Q15.6,31 16.8,32 L20.2,34.5"/><path d="M21.2,23.4 H28.8 M21.2,27.4 H26.6 M21.5,31.1 H24.3"/></g></svg>
<div class="a" style="left:880px;top:304px;width:1958px;height:81px;background:#fafafa"></div>
<div class="a" style="left:880px;top:465px;width:1958px;height:80px;background:#fafafa"></div>
<div class="a" style="left:880px;top:625px;width:1958px;height:80px;background:#fafafa"></div>
<div class="a" style="left:880px;top:785px;width:1958px;height:80px;background:#fafafa"></div>
<div class="a" style="left:880px;top:945px;width:1958px;height:80px;background:#fafafa"></div>
<div class="a" style="left:880px;top:1105px;width:1958px;height:80px;background:#fafafa"></div>
<div class="a" style="left:880px;top:304px;width:1958px;height:2px;background:#ebeef5"></div>
<div class="a" style="left:880px;top:384px;width:1958px;height:2px;background:#ebeef5"></div>
<div class="a" style="left:880px;top:464px;width:1958px;height:2px;background:#ebeef5"></div>
<div class="a" style="left:880px;top:544px;width:1958px;height:2px;background:#ebeef5"></div>
<div class="a" style="left:880px;top:624px;width:1958px;height:2px;background:#ebeef5"></div>
<div class="a" style="left:880px;top:704px;width:1958px;height:2px;background:#ebeef5"></div>
<div class="a" style="left:880px;top:784px;width:1958px;height:2px;background:#ebeef5"></div>
<div class="a" style="left:880px;top:864px;width:1958px;height:2px;background:#ebeef5"></div>
<div class="a" style="left:880px;top:944px;width:1958px;height:2px;background:#ebeef5"></div>
<div class="a" style="left:880px;top:1024px;width:1958px;height:2px;background:#ebeef5"></div>
<div class="a" style="left:880px;top:1104px;width:1958px;height:2px;background:#ebeef5"></div>
<div class="a" style="left:880px;top:1184px;width:1958px;height:2px;background:#ebeef5"></div>
<div class="a" style="left:990px;top:304px;width:2px;height:882px;background:#ebeef5"></div>
<div class="a" style="left:1378px;top:304px;width:2px;height:882px;background:#ebeef5"></div>
<div class="a" style="left:1764px;top:304px;width:2px;height:882px;background:#ebeef5"></div>
<div class="a" style="left:2150px;top:304px;width:2px;height:882px;background:#ebeef5"></div>
<div class="a" style="left:2536px;top:304px;width:2px;height:882px;background:#ebeef5"></div>
<div class="a" style="left:880px;top:304px;width:2px;height:1181px;background:#ebeef5"></div>
<div class="a" style="left:2836px;top:304px;width:2px;height:1181px;background:#ebeef5"></div>
<div class="t" style="left:1013px;top:325px;font-size:28px;-webkit-text-stroke-width:0.4px;color:#303133">编号</div>
<div class="t" style="left:1400px;top:325px;font-size:28px;-webkit-text-stroke-width:0.4px;color:#303133">名称</div>
<div class="t" style="left:1787px;top:325px;font-size:28px;-webkit-text-stroke-width:0.4px;color:#303133">是否子菜单</div>
<div class="t" style="left:2173px;top:325px;font-size:28px;-webkit-text-stroke-width:0.4px;color:#303133">显示顺序</div>
<div class="t" style="left:2559px;top:325px;font-size:28px;-webkit-text-stroke-width:0.4px;color:#303133">操作</div>
<svg class="a" style="left:922px;top:331px" width="28" height="28" viewBox="0 0 28 28"><rect width="28" height="28" rx="4" fill="#4767b1"/><path d="M6,14.8 L11.5,20.3 L22,9.8" fill="none" stroke="#fff" stroke-width="2.6"/></svg>
<svg class="a" style="left:922px;top:411px" width="28" height="28" viewBox="0 0 28 28"><rect width="28" height="28" rx="4" fill="#4767b1"/><path d="M6,14.8 L11.5,20.3 L22,9.8" fill="none" stroke="#fff" stroke-width="2.6"/></svg>
<div class="t" style="left:1013px;top:407px;font-size:28px;letter-spacing:0.6px;color:#3e8bf5">menu_auth</div>
<div class="t" style="left:1400px;top:405px;font-size:28px;letter-spacing:0;color:#646464">组织权限中心</div>
<div class="t" style="left:1787px;top:405px;font-size:28px;color:#646464">否</div>
<div class="t" style="left:2173px;top:406px;font-size:28px;color:#646464">2</div>
<div class="t" style="left:2559px;top:406px;font-size:24px;-webkit-text-stroke-width:0.1px;color:#3e8bf5">删除</div>
<svg class="a" style="left:922px;top:491px" width="28" height="28" viewBox="0 0 28 28"><rect width="28" height="28" rx="4" fill="#4767b1"/><path d="M6,14.8 L11.5,20.3 L22,9.8" fill="none" stroke="#fff" stroke-width="2.6"/></svg>
<div class="t" style="left:1013px;top:487px;font-size:28px;letter-spacing:0.6px;color:#3e8bf5">menu_1</div>
<div class="t" style="left:1400px;top:486px;font-size:28px;letter-spacing:0.6px;color:#646464">123</div>
<div class="t" style="left:1787px;top:485px;font-size:28px;color:#646464">否</div>
<div class="t" style="left:2173px;top:486px;font-size:28px;color:#646464">2</div>
<div class="t" style="left:2559px;top:486px;font-size:24px;-webkit-text-stroke-width:0.1px;color:#3e8bf5">删除</div>
<svg class="a" style="left:922px;top:571px" width="28" height="28" viewBox="0 0 28 28"><rect width="28" height="28" rx="4" fill="#4767b1"/><path d="M6,14.8 L11.5,20.3 L22,9.8" fill="none" stroke="#fff" stroke-width="2.6"/></svg>
<div class="t" style="left:1013px;top:567px;font-size:28px;letter-spacing:0.6px;color:#3e8bf5">org_center</div>
<div class="t" style="left:1400px;top:565px;font-size:28px;letter-spacing:0;color:#646464">组织中心</div>
<div class="t" style="left:1787px;top:565px;font-size:28px;color:#646464">否</div>
<div class="t" style="left:2173px;top:566px;font-size:28px;color:#646464">2</div>
<div class="t" style="left:2559px;top:566px;font-size:24px;-webkit-text-stroke-width:0.1px;color:#3e8bf5">删除</div>
<svg class="a" style="left:922px;top:651px" width="28" height="28" viewBox="0 0 28 28"><rect width="28" height="28" rx="4" fill="#4767b1"/><path d="M6,14.8 L11.5,20.3 L22,9.8" fill="none" stroke="#fff" stroke-width="2.6"/></svg>
<div class="t" style="left:1013px;top:647px;font-size:28px;letter-spacing:0.6px;color:#3e8bf5">lowTest</div>
<div class="t" style="left:1400px;top:645px;font-size:28px;letter-spacing:0;color:#646464">低开表单</div>
<div class="t" style="left:1787px;top:645px;font-size:28px;color:#646464">否</div>
<div class="t" style="left:2173px;top:646px;font-size:28px;color:#646464">3</div>
<div class="t" style="left:2559px;top:646px;font-size:24px;-webkit-text-stroke-width:0.1px;color:#3e8bf5">删除</div>
<svg class="a" style="left:922px;top:731px" width="28" height="28" viewBox="0 0 28 28"><rect width="28" height="28" rx="4" fill="#4767b1"/><path d="M6,14.8 L11.5,20.3 L22,9.8" fill="none" stroke="#fff" stroke-width="2.6"/></svg>
<div class="t" style="left:1013px;top:727px;font-size:28px;letter-spacing:0.6px;color:#3e8bf5">pingtai</div>
<div class="t" style="left:1400px;top:725px;font-size:28px;letter-spacing:0;color:#646464">平台管理</div>
<div class="t" style="left:1787px;top:725px;font-size:28px;color:#646464">否</div>
<div class="t" style="left:2173px;top:726px;font-size:28px;color:#646464">3</div>
<div class="t" style="left:2559px;top:726px;font-size:24px;-webkit-text-stroke-width:0.1px;color:#3e8bf5">删除</div>
<svg class="a" style="left:922px;top:811px" width="28" height="28" viewBox="0 0 28 28"><rect width="28" height="28" rx="4" fill="#4767b1"/><path d="M6,14.8 L11.5,20.3 L22,9.8" fill="none" stroke="#fff" stroke-width="2.6"/></svg>
<div class="t" style="left:1013px;top:807px;font-size:28px;letter-spacing:0.6px;color:#3e8bf5">A188</div>
<div class="t" style="left:1400px;top:807px;font-size:28px;letter-spacing:0.6px;color:#646464">A188</div>
<div class="t" style="left:1787px;top:805px;font-size:28px;color:#646464">否</div>
<div class="t" style="left:2173px;top:806px;font-size:28px;color:#646464">3</div>
<div class="t" style="left:2559px;top:806px;font-size:24px;-webkit-text-stroke-width:0.1px;color:#3e8bf5">删除</div>
<svg class="a" style="left:922px;top:891px" width="28" height="28" viewBox="0 0 28 28"><rect width="28" height="28" rx="4" fill="#4767b1"/><path d="M6,14.8 L11.5,20.3 L22,9.8" fill="none" stroke="#fff" stroke-width="2.6"/></svg>
<div class="t" style="left:1013px;top:887px;font-size:28px;letter-spacing:0.6px;color:#3e8bf5">quest</div>
<div class="t" style="left:1400px;top:887px;font-size:28px;letter-spacing:0.6px;color:#646464">quest</div>
<div class="t" style="left:1787px;top:885px;font-size:28px;color:#646464">否</div>
<div class="t" style="left:2173px;top:886px;font-size:28px;color:#646464">3</div>
<div class="t" style="left:2559px;top:886px;font-size:24px;-webkit-text-stroke-width:0.1px;color:#3e8bf5">删除</div>
<svg class="a" style="left:922px;top:971px" width="28" height="28" viewBox="0 0 28 28"><rect width="28" height="28" rx="4" fill="#4767b1"/><path d="M6,14.8 L11.5,20.3 L22,9.8" fill="none" stroke="#fff" stroke-width="2.6"/></svg>
<div class="t" style="left:1013px;top:967px;font-size:28px;letter-spacing:0.6px;color:#3e8bf5">indexMg</div>
<div class="t" style="left:1400px;top:967px;font-size:28px;letter-spacing:0.6px;color:#646464">indexMg</div>
<div class="t" style="left:1787px;top:965px;font-size:28px;color:#646464">否</div>
<div class="t" style="left:2173px;top:966px;font-size:28px;color:#646464">3</div>
<div class="t" style="left:2559px;top:966px;font-size:24px;-webkit-text-stroke-width:0.1px;color:#3e8bf5">删除</div>
<svg class="a" style="left:922px;top:1051px" width="28" height="28" viewBox="0 0 28 28"><rect width="28" height="28" rx="4" fill="#4767b1"/><path d="M6,14.8 L11.5,20.3 L22,9.8" fill="none" stroke="#fff" stroke-width="2.6"/></svg>
<div class="t" style="left:1013px;top:1047px;font-size:28px;letter-spacing:0.6px;color:#3e8bf5">widget1</div>
<div class="t" style="left:1400px;top:1047px;font-size:28px;letter-spacing:0.6px;color:#646464">widget1</div>
<div class="t" style="left:1787px;top:1045px;font-size:28px;color:#646464">否</div>
<div class="t" style="left:2173px;top:1046px;font-size:28px;color:#646464">3</div>
<div class="t" style="left:2559px;top:1046px;font-size:24px;-webkit-text-stroke-width:0.1px;color:#3e8bf5">删除</div>
<svg class="a" style="left:922px;top:1131px" width="28" height="28" viewBox="0 0 28 28"><rect width="28" height="28" rx="4" fill="#4767b1"/><path d="M6,14.8 L11.5,20.3 L22,9.8" fill="none" stroke="#fff" stroke-width="2.6"/></svg>
<div class="t" style="left:1013px;top:1127px;font-size:28px;letter-spacing:0.6px;color:#3e8bf5">test_shouye</div>
<div class="t" style="left:1400px;top:1125px;font-size:28px;letter-spacing:0;color:#646464">首页测试</div>
<div class="t" style="left:1787px;top:1125px;font-size:28px;color:#646464">否</div>
<div class="t" style="left:2173px;top:1126px;font-size:28px;color:#646464">3</div>
<div class="t" style="left:2559px;top:1126px;font-size:24px;-webkit-text-stroke-width:0.1px;color:#3e8bf5">删除</div>
<div class="a" style="left:880px;top:1402px;width:1958px;height:2px;background:#ebeef5"></div>
<div class="a" style="left:880px;top:1484px;width:1958px;height:2px;background:#e4e4e4"></div>
<div class="t" style="left:910px;top:1425px;font-size:24px;color:#1f1f1f">已选中<b>10</b>条</div>
<div class="t" style="left:1838px;top:1425px;font-size:24px;word-spacing:5px;color:#606266">共 38 条</div>
<div class="a" style="left:1967px;top:1417px;width:198px;height:54px;border:2px solid #dcdcdc;border-radius:4px"></div>
<div class="t" style="left:2006px;top:1426px;font-size:25px;color:#1f1f1f">10条/页</div>
<svg class="a" style="left:2131px;top:1437px" width="20" height="14" viewBox="0 0 20 14"><path d="M2,2.5 L10,10.5 L18,2.5" fill="none" stroke="#b0b3b8" stroke-width="2"/></svg>
<div class="a" style="left:2207px;top:1417px;width:59px;height:54px;border:2px solid #e4e7ed;border-radius:4px"></div>
<svg class="a" style="left:2226px;top:1434px" width="20" height="22" viewBox="0 0 20 22"><path d="M13,2.5 L5,11 L13,19.5" fill="none" stroke="#d0d3d9" stroke-width="2"/></svg>
<div class="a" style="left:2286px;top:1417px;width:46px;height:54px;border:2px solid #3e8bf5;border-radius:9px"></div>
<div class="t" style="left:2286px;top:1424px;width:46px;text-align:center;font-size:26px;font-weight:700;color:#3e8bf5">1</div>
<div class="a" style="left:2352px;top:1417px;width:46px;height:54px;border:2px solid #dcdfe6;border-radius:9px"></div>
<div class="t" style="left:2352px;top:1424px;width:46px;text-align:center;font-size:26px;font-weight:400;color:#606266">2</div>
<div class="a" style="left:2418px;top:1417px;width:46px;height:54px;border:2px solid #dcdfe6;border-radius:9px"></div>
<div class="t" style="left:2418px;top:1424px;width:46px;text-align:center;font-size:26px;font-weight:400;color:#606266">3</div>
<div class="a" style="left:2484px;top:1417px;width:46px;height:54px;border:2px solid #dcdfe6;border-radius:9px"></div>
<div class="t" style="left:2484px;top:1424px;width:46px;text-align:center;font-size:26px;font-weight:400;color:#606266">4</div>
<div class="a" style="left:2550px;top:1417px;width:60px;height:54px;border:2px solid #dcdcdc;border-radius:4px"></div>
<svg class="a" style="left:2570px;top:1434px" width="20" height="22" viewBox="0 0 20 22"><path d="M7,2.5 L15,11 L7,19.5" fill="none" stroke="#303133" stroke-width="2"/></svg>
<div class="t" style="left:2621px;top:1425px;font-size:24px;color:#606266">前往</div>
<div class="a" style="left:2680px;top:1417px;width:92px;height:54px;border:2px solid #dcdcdc;border-radius:4px"></div>
<div class="t" style="left:2680px;top:1424px;width:92px;text-align:center;font-size:26px;color:#1f1f1f">1</div>
<div class="t" style="left:2781px;top:1425px;font-size:24px;color:#606266">页</div>
</body></html>
